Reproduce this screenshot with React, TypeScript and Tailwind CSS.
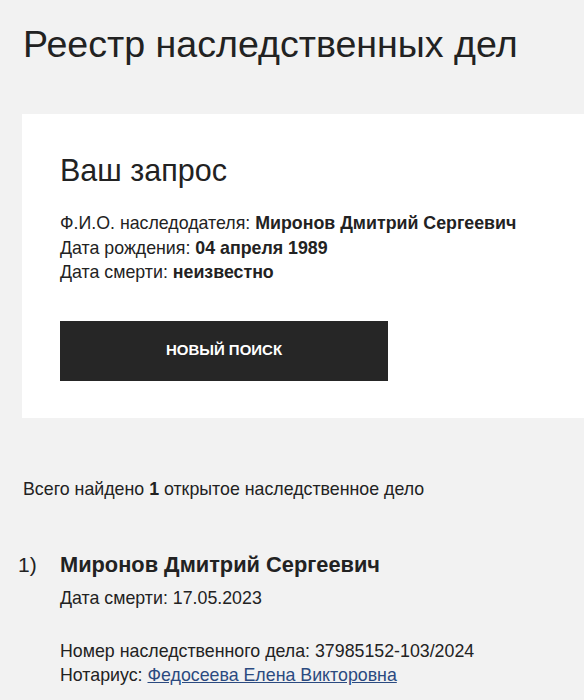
export default function App() {
  return (
    <div className="min-h-[700px] w-[584px] overflow-hidden bg-[#f2f2f2] text-[#222] font-['Liberation_Sans',Arial,sans-serif]">
      <h1 className="pl-[23px] pt-[24px] text-[37.6px] leading-[40px]">Реестр наследственных дел</h1>

      <div className="ml-[22px] mt-[50px] h-[304px] bg-white pl-[38px] pt-[38px]">
        <h2 className="text-[30.5px] leading-[36px]">Ваш запрос</h2>
        <div className="mt-[23px] text-[17.8px] leading-[24.5px]">
          <p>
            Ф.И.О. наследодателя: <b>Миронов Дмитрий Сергеевич</b>
          </p>
          <p>
            Дата рождения: <b>04 апреля 1989</b>
          </p>
          <p>
            Дата смерти: <b>неизвестно</b>
          </p>
        </div>
        <button className="mt-[36px] h-[60px] w-[328px] bg-[#262626] text-[15px] font-bold uppercase text-white">
          Новый поиск
        </button>
      </div>

      <p className="pl-[23px] pt-[59px] text-[17.8px] leading-[24px]">
        Всего найдено <b>1</b> открытое наследственное дело
      </p>

      <div className="mt-[50px] flex">
        <span className="w-[60px] pl-[18px] text-[21px] leading-[28px]">1)</span>
        <div>
          <h3 className="text-[21.8px] font-bold leading-[28px]">Миронов Дмитрий Сергеевич</h3>
          <p className="mt-[7px] text-[17.8px] leading-[24px]">Дата смерти: 17.05.2023</p>
          <div className="mt-[29px] text-[17.8px] leading-[24px]">
            <p>Номер наследственного дела: 37985152-103/2024</p>
            <p>
              Нотариус:{" "}
              <a href="#" className="text-[#2b4a80] underline">
                Федосеева Елена Викторовна
              </a>
            </p>
          </div>
        </div>
      </div>
    </div>
  );
}
